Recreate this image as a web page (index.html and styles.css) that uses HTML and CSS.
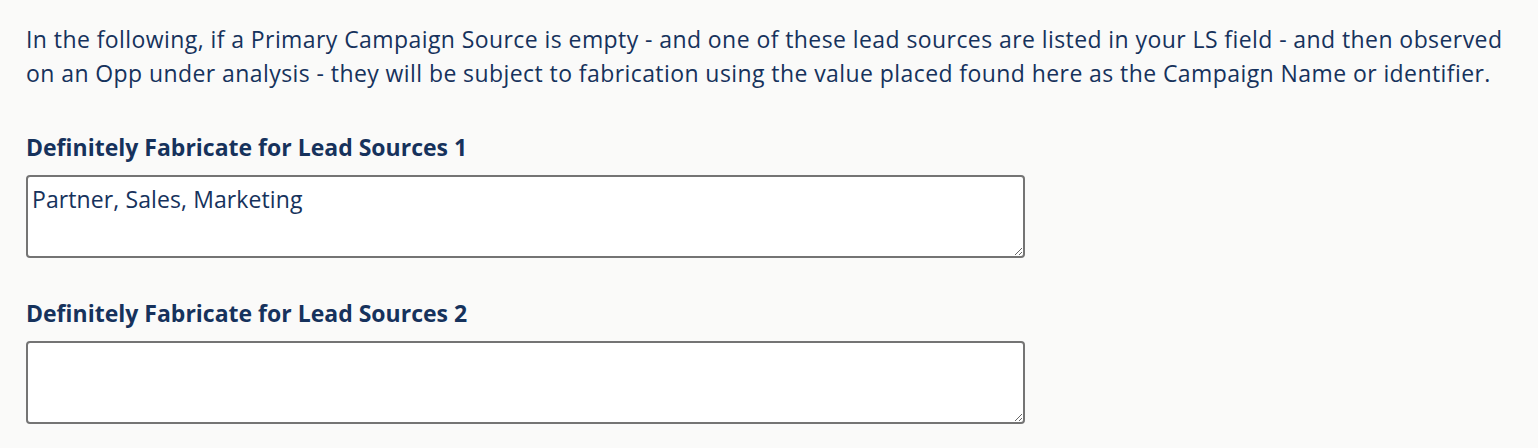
FILE: index.html
```html
<!DOCTYPE html>
<html lang="en">
<head>
<meta charset="UTF-8">
<title>Lead Source Fabrication</title>
<link rel="stylesheet" href="styles.css">
</head>
<body>

<div class="settings">
  <p class="intro">In the following, if a Primary Campaign Source is empty - and one of these lead sources are listed in your LS field - and then observed on an Opp under analysis - they will be subject to fabrication using the value placed found here as the Campaign Name or identifier.</p>

  <div class="field">
    <label for="ls1">Definitely Fabricate for Lead Sources 1</label>
    <textarea id="ls1" name="ls1">Partner, Sales, Marketing</textarea>
  </div>

  <div class="field">
    <label for="ls2">Definitely Fabricate for Lead Sources 2</label>
    <textarea id="ls2" name="ls2"></textarea>
  </div>
</div>

</body>
</html>
```

FILE: styles.css
```css
body {
  margin: 0;
  background-color: #fafaf9;
  font-family: "Open Sans", "Noto Sans", sans-serif;
  color: #16325c;
}
.settings {
  padding: 22px 26px 0 26px;
  width: 1486px;
}
.intro {
  margin: 0 0 43px 0;
  font-size: 23px;
  line-height: 34px;
  letter-spacing: 0.42px;
}
.field {
  margin-bottom: 41px;
}
.field label {
  display: block;
  font-size: 23px;
  font-weight: 700;
  line-height: 28px;
  margin-bottom: 14px;
}
.field textarea {
  display: block;
  width: 999px;
  height: 83px;
  box-sizing: border-box;
  padding: 8px 4px;
  border: 2px solid #747474;
  border-radius: 4px;
  background-color: #fff;
  font-family: inherit;
  font-size: 23px;
  line-height: 28px;
  letter-spacing: 0.1px;
  color: #16325c;
}
```
